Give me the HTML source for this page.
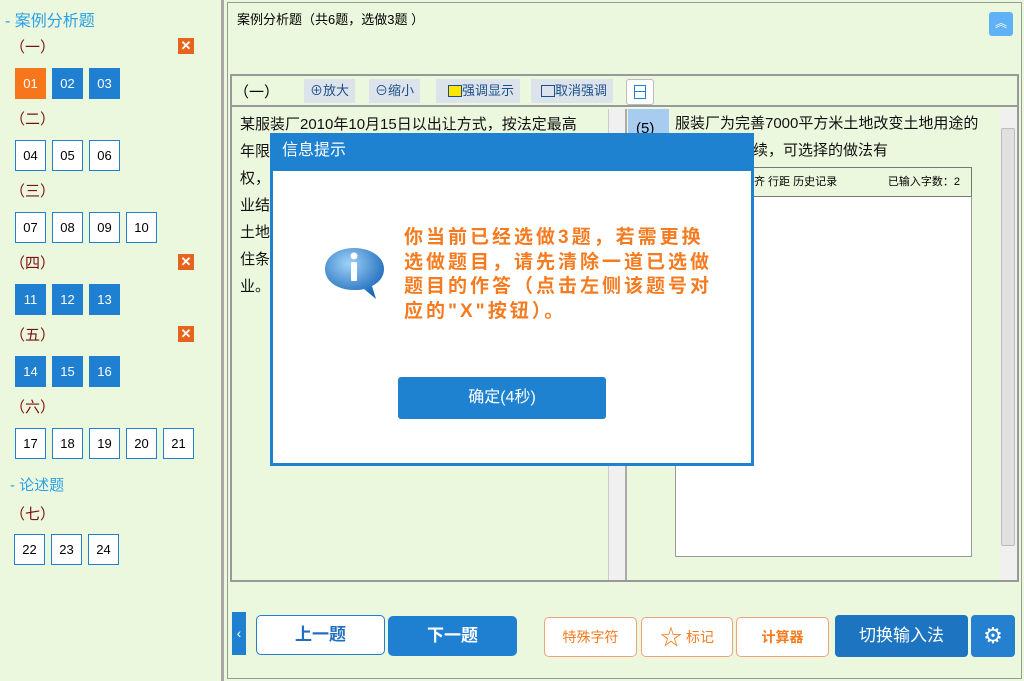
<!DOCTYPE html>
<html><head><meta charset="utf-8"><style>
*{box-sizing:border-box;margin:0;padding:0}
body{width:1024px;height:681px;background:#ecf8dd;font-family:"Liberation Sans","Noto Sans CJK SC",sans-serif;position:relative;overflow:hidden;font-size:14px}
.a{position:absolute}
.side{left:0;top:0;width:224px;height:681px;background:#ecf8dd;border-right:3px solid #a8a8a8}
.sec{color:#2aa0e8;font-size:16px}
.lbl{color:#7a1010;font-size:15px}
.q{position:absolute;width:31px;height:31px;border:1px solid #1f7fd0;background:#fff;color:#000;font-size:13px;text-align:center;line-height:29px}
.q.b{background:#1f7fd0;color:#fff}
.q.o{background:#f7761c;border-color:#f7761c;color:#fff}
.x{position:absolute;width:16px;height:16px;background:#e8641e;color:#fff;font-size:13px;line-height:16px;text-align:center;font-weight:bold}
.tb{position:absolute;top:79px;height:24px;background:#dde3ea;font-size:13px;line-height:24px;color:#1a4f8a;padding:0 6px}
.txt{font-size:15px;color:#111;line-height:27px}
.ob{position:absolute;top:617px;height:40px;border:1px solid #f0a27a;border-radius:5px;background:#fff;color:#f47b20;font-size:14px;text-align:center;line-height:38px}
</style></head><body>
<div class="a side"></div>
<div class="a sec" style="left:5px;top:7px">- 案例分析题</div>
<div class="a lbl" style="left:10px;top:36px">（一）</div><div class="x" style="left:178px;top:38px">✕</div>
<div class="q o" style="left:15px;top:68px">01</div><div class="q b" style="left:52px;top:68px">02</div><div class="q b" style="left:89px;top:68px">03</div>
<div class="a lbl" style="left:10px;top:108px">（二）</div>
<div class="q" style="left:15px;top:140px">04</div><div class="q" style="left:52px;top:140px">05</div><div class="q" style="left:89px;top:140px">06</div>
<div class="a lbl" style="left:10px;top:180px">（三）</div>
<div class="q" style="left:15px;top:212px">07</div><div class="q" style="left:52px;top:212px">08</div><div class="q" style="left:89px;top:212px">09</div><div class="q" style="left:126px;top:212px">10</div>
<div class="a lbl" style="left:10px;top:252px">（四）</div><div class="x" style="left:178px;top:254px">✕</div>
<div class="q b" style="left:15px;top:284px">11</div><div class="q b" style="left:52px;top:284px">12</div><div class="q b" style="left:89px;top:284px">13</div>
<div class="a lbl" style="left:10px;top:324px">（五）</div><div class="x" style="left:178px;top:326px">✕</div>
<div class="q b" style="left:15px;top:356px">14</div><div class="q b" style="left:52px;top:356px">15</div><div class="q b" style="left:89px;top:356px">16</div>
<div class="a lbl" style="left:10px;top:396px">（六）</div>
<div class="q" style="left:15px;top:428px">17</div><div class="q" style="left:52px;top:428px">18</div><div class="q" style="left:89px;top:428px">19</div><div class="q" style="left:126px;top:428px">20</div><div class="q" style="left:163px;top:428px">21</div>
<div class="a sec" style="left:10px;top:474px;font-size:15px">- 论述题</div>
<div class="a lbl" style="left:10px;top:503px">（七）</div>
<div class="q" style="left:14px;top:534px">22</div><div class="q" style="left:51px;top:534px">23</div><div class="q" style="left:88px;top:534px">24</div>

<div class="a" style="left:227px;top:2px;width:795px;height:677px;border:1px solid #999"></div>
<div class="a" style="left:237px;top:9px;font-size:13px">案例分析题（共6题，选做3题 ）</div>
<div class="a" style="left:989px;top:12px;width:24px;height:24px;background:#5fb2f5;border-radius:3px;color:#fff;text-align:center;line-height:22px;font-size:12px">︽</div>

<div class="a" style="left:230px;top:74px;width:789px;height:508px;border:2px solid #999;background:#ecf8dd"></div>
<div class="a" style="left:232px;top:76px;width:785px;height:31px;border-bottom:2px solid #999"></div>
<div class="a" style="left:234px;top:81px;font-size:15px">（一）</div>
<div class="tb" style="left:304px">⊕放大</div>
<div class="tb" style="left:369px">⊖缩小</div>
<div class="tb" style="left:436px;padding-left:12px"><span style="display:inline-block;width:14px;height:12px;background:#ffe600;border:1px solid #1a4f8a;vertical-align:-2px"></span>强调显示</div>
<div class="tb" style="left:531px;padding-left:10px"><span style="display:inline-block;width:14px;height:12px;border:1px solid #1a4f8a;vertical-align:-2px"></span>取消强调</div>
<div class="a" style="left:626px;top:79px;width:28px;height:26px;border:1px solid #bbb;background:#fff;border-radius:3px"><div class="a" style="left:7px;top:5px;width:12px;height:14px;border:1px solid #1f7fd0"></div><div class="a" style="left:7px;top:11px;width:12px;height:1px;background:#1f7fd0"></div></div>

<div class="a" style="left:608px;top:109px;width:17px;height:471px;background:#f0f0f0;border-left:1px solid #ccc"></div>
<div class="a" style="left:625px;top:109px;width:2px;height:471px;background:#aaa"></div>
<div class="a txt" style="left:240px;top:111px;width:360px">某服装厂2010年10月15日以出让方式，按法定最高<br>年限<br>权，<br>业结<br>土地<br>住条<br>业。</div>
<div class="a" style="left:628px;top:109px;width:41px;height:50px;background:#a8cbf0;font-size:15px;padding:11px 0 0 8px">(5)</div>
<div class="a txt" style="left:675px;top:110px">服装厂为完善7000平方米土地改变土地用途的<br><span style="margin-left:78px">续，可选择的做法有</span></div>
<div class="a" style="left:675px;top:167px;width:297px;height:390px;border:1px solid #999;background:#fff"></div>
<div class="a" style="left:675px;top:167px;width:297px;height:30px;border:1px solid #777;background:#ecf8dd;font-size:11px;line-height:28px"><span style="margin-left:78px">齐 行距 历史记录</span><span style="position:absolute;right:11px">已输入字数：2</span></div>
<div class="a" style="left:1000px;top:109px;width:17px;height:471px;background:#f0f0f0"></div>
<div class="a" style="left:1001px;top:128px;width:14px;height:418px;background:#e0e0e0;border:1px solid #bbb;border-radius:2px"></div>

<div class="a" style="left:232px;top:612px;width:14px;height:43px;background:#1f7fd0;color:#fff;font-size:14px;line-height:43px;text-align:center">‹</div>
<div class="a" style="left:256px;top:615px;width:129px;height:40px;border:1px solid #1f7fd0;border-radius:5px;background:#fff;color:#1f6fc0;font-size:17px;font-weight:bold;text-align:center;line-height:38px">上一题</div>
<div class="a" style="left:388px;top:616px;width:129px;height:40px;border-radius:5px;background:#1f7fd0;color:#fff;font-size:17px;font-weight:bold;text-align:center;line-height:40px">下一题</div>
<div class="ob" style="left:544px;width:93px">特殊字符</div>
<div class="ob" style="left:641px;width:92px"><span style="font-size:22px;vertical-align:-3px">☆</span> 标记</div>
<div class="ob" style="left:736px;width:93px;font-weight:bold">计算器</div>
<div class="a" style="left:835px;top:615px;width:133px;height:42px;border-radius:4px;background:#1d74c0;color:#fff;font-size:17px;text-align:center;line-height:42px">切换输入法</div>
<div class="a" style="left:971px;top:615px;width:44px;height:42px;border-radius:4px;background:#2581d0;color:#fff;font-size:22px;text-align:center;line-height:42px">⚙</div>

<div class="a" style="left:270px;top:133px;width:484px;height:333px;background:#fff;border:3px solid #1f82d0;border-top:none"></div>
<div class="a" style="left:270px;top:133px;width:484px;height:38px;background:#1f82d0;color:#fff;font-size:16px;line-height:36px;padding-left:12px">信息提示</div>
<svg class="a" style="left:323px;top:245px" width="62" height="58" viewBox="0 0 62 58"><defs><radialGradient id="g" cx="40%" cy="30%" r="70%"><stop offset="0" stop-color="#9fd2fa"/><stop offset="1" stop-color="#1a68b8"/></radialGradient></defs><path d="M31 3C14 3 2 12 2 24c0 12 12 21 29 21 4 0 7 0 10-1l12 10-4-13c8-4 12-10 12-17C61 12 48 3 31 3z" fill="url(#g)"/><circle cx="31" cy="11" r="3.5" fill="#fff"/><rect x="28" y="17" width="6" height="19" rx="1" fill="#fff"/></svg>
<div class="a" style="left:404px;top:226px;width:340px;color:#f47b20;font-size:19px;font-weight:bold;line-height:24.5px;letter-spacing:3px;white-space:nowrap">你当前已经选做3题，若需更换<br>选做题目，请先清除一道已选做<br>题目的作答（点击左侧该题号对<br>应的"X"按钮）。</div>
<div class="a" style="left:398px;top:377px;width:208px;height:42px;background:#1f82d0;border-radius:3px;color:#fff;font-size:16px;text-align:center;line-height:42px">确定(4秒)</div>
</body></html>
